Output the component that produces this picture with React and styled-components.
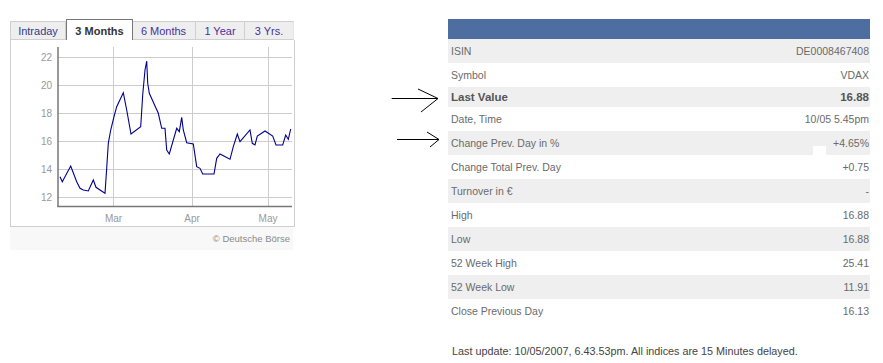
import React from "react";
import styled, { createGlobalStyle } from "styled-components";

const GlobalStyle = createGlobalStyle`
  body {
    margin: 0;
    background: #fff;
    font-family: "Liberation Sans", Arial, sans-serif;
  }
`

const tabs = [
  { label: "Intraday", width: 56, color: "#2f3b8c" },
  { label: "3 Months", width: 67, active: true },
  { label: "6 Months", width: 64, color: "#4a2f9c" },
  { label: "1 Year", width: 49, color: "#4a2f9c" },
  { label: "3 Yrs.", width: 49, color: "#4a2f9c" },
]

const rows = [
  { label: "ISIN", value: "DE0008467408", shade: true },
  { label: "Symbol", value: "VDAX" },
  { label: "Last Value", value: "16.88", shade: true, strong: true },
  { label: "Date, Time", value: "10/05 5.45pm" },
  { label: "Change Prev. Day in %", value: "+4.65%", shade: true, blot: true },
  { label: "Change Total Prev. Day", value: "+0.75" },
  { label: "Turnover in €", value: "-", shade: true },
  { label: "High", value: "16.88" },
  { label: "Low", value: "16.88", shade: true },
  { label: "52 Week High", value: "25.41" },
  { label: "52 Week Low", value: "11.91", shade: true },
  { label: "Close Previous Day", value: "16.13" },
]

// chart points in page pixels
const points = [
  [60, 176.7], [62.3, 181.7], [70.7, 166], [76.7, 181.7], [80, 188.3], [83.3, 190],
  [88.3, 191], [93.3, 180], [96, 187.3], [100, 190], [105, 193.3], [106.7, 168.3],
  [108.3, 143.3], [110.7, 130], [114, 116.7], [116.7, 106.7], [123.3, 92.7], [126.7, 110],
  [131, 134], [140.7, 126.7], [142.7, 95], [145, 70], [146.7, 61], [147.7, 83.3],
  [149.3, 93.3], [158.3, 113.3], [161.7, 128.3], [165, 128.3], [166.7, 150], [169.3, 154],
  [176.7, 128.3], [179.3, 131.7], [181.7, 117.3], [183.3, 130], [186.7, 142.7], [193.3, 144],
  [196.7, 166.7], [200, 168.3], [202.7, 174], [214, 174], [216.7, 158.3], [220, 154],
  [230, 159.3], [233.3, 146.7], [237.3, 134], [240, 141.7], [250, 130], [252.3, 143.3],
  [255, 145], [257.3, 136], [265, 131], [272.7, 136], [276, 145], [282.7, 145],
  [285.7, 135], [288.3, 139.3], [290.7, 129],
]

const yTicks = [22, 20, 18, 16, 14, 12]
const months = [
  { label: "Mar", x: 102.5 },
  { label: "Apr", x: 181 },
  { label: "May", x: 257 },
]

const Chart = () => {
  const line = points.map(([x, y]) => `${(x - 11).toFixed(1)},${(y - 40).toFixed(1)}`).join(" ")
  return (
    <svg width="283" height="186" viewBox="0 0 283 186">
      {yTicks.map((v) => {
        const y = Math.round(157 - (v - 12) * 14) + 0.5
        return (
          <g key={v}>
            <line x1="47" x2="281" y1={y} y2={y} stroke="#cccccc" shapeRendering="crispEdges" />
            <text x="41" y={y + 3.5} textAnchor="end" fontSize="10" fill="#999" fontFamily="Liberation Sans, Arial, sans-serif">{v}</text>
          </g>
        )
      })}
      {months.map((m) => (
        <g key={m.label}>
          <line x1={m.x} x2={m.x} y1="7" y2="166" stroke="#cccccc" shapeRendering="crispEdges" />
          <text x={m.x} y="182" textAnchor="middle" fontSize="10" fill="#999" fontFamily="Liberation Sans, Arial, sans-serif">{m.label}</text>
        </g>
      ))}
      <line x1="47" x2="47" y1="7" y2="167" stroke="#777" strokeWidth="1.5" />
      <line x1="46.3" x2="281" y1="166.5" y2="166.5" stroke="#777" strokeWidth="1.5" />
      <polyline points={line} fill="none" stroke="#00008f" strokeWidth="1.1" />
    </svg>
  )
}

const Arrows = () => (
  <svg width="51" height="140" viewBox="0 0 51 140">
    <g stroke="#000" strokeWidth="1" fill="none">
      <line x1="2.7" y1="79.5" x2="49" y2="79.5" />
      <polyline points="29,70 49,79.5 32,93" />
      <line x1="8" y1="120.5" x2="50" y2="120.5" />
      <polyline points="38,113 50,120.5 41,128" />
    </g>
  </svg>
)

const App = () => {
  return (
    <Page>
      <GlobalStyle />
      <ChartWidget>
        <TabBar>
          {tabs.map((t) => (
            <Tab key={t.label} $width={t.width} $active={t.active} $color={t.color}>
              {t.label}
            </Tab>
          ))}
        </TabBar>
        <ChartPanel>
          <Chart />
        </ChartPanel>
        <Credit>© Deutsche Börse</Credit>
      </ChartWidget>

      <ArrowCol>
        <Arrows />
      </ArrowCol>

      <QuoteCol>
        <QuoteTable>
          <HeaderBar />
          {rows.map((r) => (
            <Row key={r.label} $shade={r.shade} $strong={r.strong}>
              <span>{r.label}</span>
              <span>{r.value}</span>
              {r.blot && <Blot />}
            </Row>
          ))}
        </QuoteTable>
        <Note>Last update: 10/05/2007, 6.43.53pm. All indices are 15 Minutes delayed.</Note>
      </QuoteCol>
    </Page>
  )
}

export default App;


const Page = styled.div`
  display: flex;
  align-items: flex-start;
  padding-top: 19px;
  width: 883px;
  height: 344px;
`

const ChartWidget = styled.div`
  margin-left: 10px;
  width: 285px;
  display: flex;
  flex-direction: column;
`

const TabBar = styled.div`
  display: flex;
  align-items: flex-end;
  height: 21px;
`

const Tab = styled.div`
  box-sizing: border-box;
  width: ${(p) => p.$width}px;
  height: ${(p) => (p.$active ? 21 : 19)}px;
  display: flex;
  align-items: center;
  justify-content: center;
  font-size: 11px;
  font-weight: ${(p) => (p.$active ? "bold" : "normal")};
  color: ${(p) => (p.$active ? "#333" : p.$color)};
  background: ${(p) => (p.$active ? "#fff" : "#eeeeee")};
  border: 1px solid ${(p) => (p.$active ? "#777" : "#cfcfcf")};
  border-bottom: ${(p) => (p.$active ? "none" : "1px solid #cfcfcf")};
  border-left-width: ${(p) => (p.$active ? 1 : 0)}px;
  padding-top: ${(p) => (p.$active ? 1 : 0)}px;
  margin-right: ${(p) => (p.$active ? -1 : 0)}px;
  position: relative;
  z-index: ${(p) => (p.$active ? 1 : 0)};

  &:first-child {
    border-left-width: 1px;
  }
  &:last-child {
    border-right-color: #e6e6e6;
  }
`

const ChartPanel = styled.div`
  height: 186px;
  border: 1px solid #cfcfcf;
  border-top: none;
  display: flex;
`

const Credit = styled.div`
  height: 23px;
  margin-right: 2px;
  padding-right: 3px;
  background: #f8f8f8;
  display: flex;
  align-items: center;
  justify-content: flex-end;
  font-size: 9.5px;
  color: #8a8a8a;
`

const ArrowCol = styled.div`
  margin-left: 94px;
  width: 51px;
  display: flex;
`

const QuoteCol = styled.div`
  margin-left: 8px;
  width: 422px;
  display: flex;
  flex-direction: column;
`

const QuoteTable = styled.div`
  display: flex;
  flex-direction: column;
`

const HeaderBar = styled.div`
  height: 20px;
  background: #4e6ea2;
`

const Row = styled.div`
  position: relative;
  height: ${(p) => (p.$strong ? 20 : 24)}px;
  padding: 0 1px 0 3px;
  display: flex;
  align-items: center;
  justify-content: space-between;
  background: ${(p) => (p.$shade ? "#efefef" : "#fff")};
  font-size: ${(p) => (p.$strong ? "11.5px" : "10.5px")};
  font-weight: ${(p) => (p.$strong ? "bold" : "normal")};
  color: ${(p) => (p.$strong ? "#555" : "#6a6a6a")};
`

const Blot = styled.i`
  position: absolute;
  left: 365px;
  top: 15px;
  width: 13px;
  height: 9px;
  background: #fff;
`

const Note = styled.div`
  margin-top: 21px;
  padding-left: 4px;
  font-size: 10.8px;
  line-height: 14px;
  color: #444;
`
